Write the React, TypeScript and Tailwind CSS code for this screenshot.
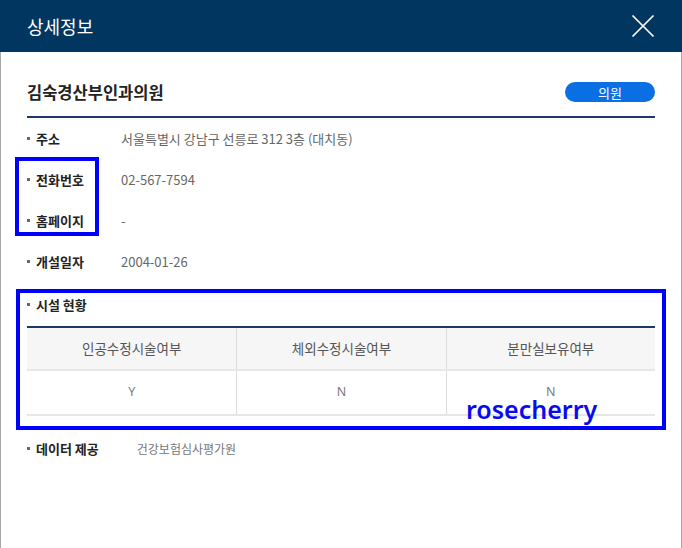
import React from "react";

const rows: { label: string; value: string }[] = [
  { label: "주소", value: "서울특별시 강남구 선릉로 312 3층 (대치동)" },
  { label: "전화번호", value: "02-567-7594" },
  { label: "홈페이지", value: "-" },
  { label: "개설일자", value: "2004-01-26" },
];

function Bullet() {
  return <span className="w-[3px] h-[3px] bg-[#666] mr-[6px] shrink-0" />;
}

export default function App() {
  return (
    <div className="relative w-[682px] h-[548px] bg-white overflow-hidden font-['Noto_Sans_CJK_KR','Noto_Sans',sans-serif]">
      {/* header */}
      <div className="h-[52px] bg-[#00365f] flex items-center justify-between pl-[27px] pr-[26px]">
        <span className="text-white text-[18px] leading-none">상세정보</span>
        <svg width="24" height="24" viewBox="0 0 24 24" className="mr-[1px]">
          <path d="M1.5 1.5 L22.5 22.5 M22.5 1.5 L1.5 22.5" stroke="#fff" strokeWidth="1.7" fill="none" />
        </svg>
      </div>

      {/* body */}
      <div className="h-[496px] border-x border-[#a8a8a8] px-[26px] pt-[16px]">
        <div className="h-[48px] flex items-center justify-between border-b-2 border-[#1f3864] box-content">
          <span className="text-[16.5px] font-bold text-[#222] leading-none">김숙경산부인과의원</span>
          <span className="w-[90px] h-[20px] rounded-full bg-[#0a6fe3] text-white text-[13px] leading-none flex items-center justify-center">
            의원
          </span>
        </div>

        {rows.map((r) => (
          <div key={r.label} className="h-[41px] flex items-center">
            <Bullet />
            <span className="w-[85px] text-[13px] font-bold text-[#222] leading-none">{r.label}</span>
            <span className="text-[13px] text-[#666] leading-none">{r.value}</span>
          </div>
        ))}

        <div className="h-[44px] flex items-center">
          <Bullet />
          <span className="text-[13px] font-bold text-[#222] leading-none">시설 현황</span>
        </div>

        <div className="border-t-2 border-[#1f3a5f] border-b-2 border-b-[#e6e6e6]">
          <div className="grid grid-cols-3 h-[41px] bg-[#f6f6f6] border-b-2 border-[#e8e8e8] box-content">
            {["인공수정시술여부", "체외수정시술여부", "분만실보유여부"].map((h, i) => (
              <div
                key={h}
                className={`flex items-center justify-center text-[13.5px] text-[#555] leading-none ${i > 0 ? "border-l border-[#dcdcdc]" : ""}`}
              >
                {h}
              </div>
            ))}
          </div>
          <div className="grid grid-cols-3 h-[43px]">
            {["Y", "N", "N"].map((v, i) => (
              <div
                key={i}
                className={`flex items-center justify-center text-[12.5px] text-[#7a7a7a] leading-none font-['Noto_Sans',sans-serif] ${i > 0 ? "border-l border-[#dcdcdc]" : ""}`}
              >
                {v}
              </div>
            ))}
          </div>
        </div>

        <div className="mt-[12px] h-[41px] flex items-center">
          <Bullet />
          <span className="text-[13px] font-bold text-[#222] leading-none mr-[38px]">데이터 제공</span>
          <span className="text-[12px] text-[#777] leading-none">건강보험심사평가원</span>
        </div>
      </div>

      {/* annotation overlays */}
      <div className="absolute left-[15px] top-[157px] w-[84px] h-[79px] border-4 border-[#0000ff]" />
      <div className="absolute left-[16px] top-[289px] w-[650px] h-[141px] border-4 border-[#0000ff]" />
      <div className="absolute left-[466px] top-[397px] text-[25px] font-semibold text-[#0a0aee] leading-none font-['Noto_Sans',sans-serif]">
        rosecherry
      </div>
    </div>
  );
}
